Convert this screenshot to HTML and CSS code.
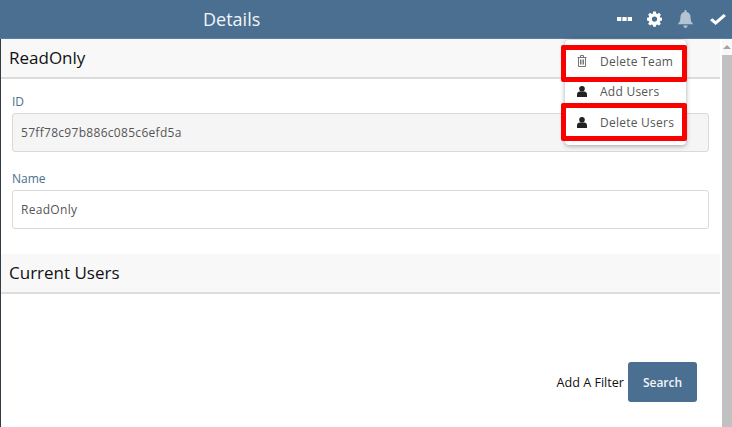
FILE: index.html
```html
<!DOCTYPE html>
<html lang="en">
<head>
  <meta charset="UTF-8">
  <title>Details</title>
  <link rel="stylesheet" href="styles.css">
</head>
<body>

<header class="topbar">
  <h1 class="topbar-title">Details</h1>
  <div class="topbar-icons">
    <svg class="icon-more" width="15" height="4" viewBox="0 0 14 4" preserveAspectRatio="none"><rect width="4" height="4"/><rect x="5" width="4" height="4"/><rect x="10" width="4" height="4"/></svg>
    <svg class="icon-gear" width="15" height="16" viewBox="0 0 16 16"><path fill-rule="evenodd" d="M6.6 0h2.8l.4 2.1 1.2.5 1.8-1.2 2 2-1.2 1.8.5 1.2 2 .4v2.8l-2 .4-.5 1.2 1.2 1.8-2 2-1.8-1.2-1.2.5-.4 2H6.600l-.4-2-1.200-.5-1.800 1.200-2-2 1.200-1.800-.5-1.200-2-.4V6.800l2-.4.5-1.200L1.200 3.400l2-2L5 2.600l1.200-.5zM8 5.200a2.800 2.800 0 1 0 0 5.600 2.800 2.800 0 0 0 0-5.600z"/></svg>
    <svg class="icon-bell" width="17" height="18" viewBox="0 0 16 17"><path d="M8 0c.6 0 1 .4 1 1v.8c2.300.4 3.800 2.300 3.800 4.700 0 4 1 5.300 2.700 7H.5c1.700-1.700 2.700-3 2.700-7C3.200 4.100 4.700 2.200 7 1.800V1c0-.6.400-1 1-1zM6 14.700h4C10 15.900 9.100 17 8 17s-2-1.100-2-2.300z"/></svg>
    <svg class="icon-check" width="16" height="11" viewBox="0 0 15 12" preserveAspectRatio="none"><path d="M5.300 12 0 6.700l2.200-2.200 3.100 3.100L12.800 0 15 2.200z"/></svg>
  </div>
</header>

<div class="page">
  <main class="content">
    <section class="panel-head"><h2>ReadOnly</h2></section>

    <div class="fields">
      <div class="field-group">
        <label>ID</label>
        <div class="input input-readonly">57ff78c97b886c085c6efd5a</div>
      </div>
      <div class="field-group">
        <label>Name</label>
        <div class="input">ReadOnly</div>
      </div>
    </div>

    <section class="panel-head"><h2>Current Users</h2></section>

    <div class="filter-row">
      <span class="filter-label">Add A Filter</span>
      <button type="button" class="btn">Search</button>
    </div>
  </main>

  <div class="scrollbar">
    <div class="scroll-arrow"></div>
    <div class="scroll-thumb"></div>
  </div>
</div>

<ul class="menu">
  <li class="menu-item marked-team">
    <svg class="menu-icon" width="10" height="12" viewBox="0 0 10 12"><path fill="none" stroke="#666" stroke-width="0.9" d="M1.500 3v8.500h7V3M.5 2.500h9M3.500 2.500V.5h3v2M3.500 4.500v5M5 4.500v5M6.500 4.500v5"/></svg>
    Delete Team
  </li>
  <li class="menu-item">
    <svg class="menu-icon" width="10" height="11" viewBox="0 0 10 11"><circle cx="5" cy="2.800" r="2.800"/><path d="M0 11V8.500C0 6.800 1.200 5.600 2.800 5.600h4.400C8.800 5.600 10 6.800 10 8.500V11z"/></svg>
    Add Users
  </li>
  <li class="menu-item marked-users">
    <svg class="menu-icon" width="10" height="11" viewBox="0 0 10 11"><circle cx="5" cy="2.800" r="2.800"/><path d="M0 11V8.500C0 6.800 1.200 5.600 2.800 5.600h4.400C8.800 5.600 10 6.800 10 8.500V11z"/></svg>
    Delete Users
  </li>
</ul>

</body>
</html>
```

FILE: styles.css
```css
html, body {
  margin: 0;
  height: 427px;
  overflow: hidden;
}
body {
  font-family: "Open Sans", sans-serif;
  background: white;
  color: #555;
  position: relative;
}

.topbar {
  height: 38px;
  background: #4a6f91;
  border-bottom: 1px solid #5d7f9e;
  display: flex;
  align-items: center;
  justify-content: space-between;
}
.topbar-title {
  margin: 0 0 0 203px;
  font-size: 18px;
  font-weight: 400;
  color: #f2f5f8;
}
.topbar-icons {
  display: flex;
  align-items: center;
  margin-right: 6px;
  fill: white;
}
.icon-more { margin-right: 15px; }
.icon-gear { margin-right: 15px; }
.icon-bell { margin-right: 16px; fill: #b4c3d1; }

.page {
  display: flex;
  height: 388px;
}
.content {
  width: 719px;
  border-left: 1px solid #333c44;
}
.panel-head {
  height: 36px;
  padding-bottom: 2px;
  background: #f8f8f8;
  border-bottom: 2px solid #ddd;
  display: flex;
  align-items: center;
  padding-left: 8px;
}
.panel-head h2 {
  margin: 0;
  font-size: 17px;
  font-weight: 400;
  color: #111;
}

.fields {
  padding: 14px 11px 25px;
}
.field-group {
  margin-bottom: 18px;
}
.field-group:last-child {
  margin-bottom: 0;
}
.field-group label {
  display: block;
  font-size: 12px;
  line-height: 18px;
  margin-bottom: 2px;
  color: #4a6f91;
}
.input {
  height: 37px;
  border: 1px solid #d9d9d9;
  border-radius: 3px;
  padding-left: 8px;
  display: flex;
  align-items: center;
  font-size: 12px;
  letter-spacing: 0.3px;
  color: #555;
}
.input-readonly {
  background: #f5f5f5;
}

.filter-row {
  display: flex;
  align-items: center;
  justify-content: flex-end;
  gap: 4px;
  margin-top: 68px;
  padding-right: 23px;
}
.filter-label {
  font-size: 12.6px;
  color: #111;
}
.btn {
  width: 69px;
  height: 40px;
  background: #4a6f91;
  color: #f2f5f8;
  border: none;
  border-radius: 3px;
  font-family: inherit;
  font-size: 12px;
  font-weight: 600;
  padding: 0;
}

.scrollbar {
  width: 10px;
  margin-left: 2px;
  background: #f8f8f8;
}
.scroll-arrow {
  width: 0;
  margin: 6px auto;
  border-left: 4px solid transparent;
  border-right: 4px solid transparent;
  border-bottom: 4px solid #a3a3a3;
}
.scroll-thumb {
  height: 372px;
  background: #c1c1c1;
}

.menu {
  position: absolute;
  left: 565px;
  top: 40px;
  width: 121px;
  margin: 0;
  padding: 6px 0 8px;
  list-style: none;
  background: white;
  border-radius: 4px;
  box-shadow: 0 1px 5px rgba(0, 0, 0, 0.35);
}
.menu-item {
  position: relative;
  height: 30px;
  display: flex;
  align-items: center;
  font-size: 12px;
  letter-spacing: 0.25px;
  color: #555;
  padding-left: 12px;
}
.menu-item:nth-child(2) {
  height: 31px;
}
.menu-icon {
  margin-right: 13px;
  fill: #222;
}
.marked-team::after,
.marked-users::after {
  content: "";
  position: absolute;
  left: -4px;
  right: -1px;
  border: 5px solid #fb0000;
  border-radius: 2px;
}
.marked-team::after {
  top: -1px;
  bottom: -6px;
}
.marked-users::after {
  top: -4px;
  bottom: -4px;
}
```
